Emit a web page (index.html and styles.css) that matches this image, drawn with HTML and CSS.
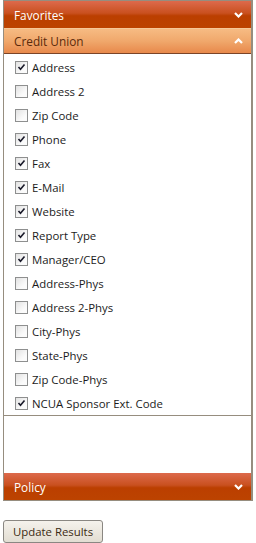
FILE: index.html
```html
<!DOCTYPE html>
<html lang="en">
  <head>
    <meta charset="UTF-8" />
    <meta name="viewport" content="width=device-width, initial-scale=1.0" />
    <title>Filters</title>
    <link rel="stylesheet" href="styles.css">
  </head>
  <body>
    <div class="panel">
      <div class="bar dark">
        <span>Favorites</span>
        <svg class="chev" width="9" height="6" viewBox="0 0 9 6"><path d="M1 1l3.5 3.5L8 1" fill="none" stroke="#fff" stroke-width="2.2"/></svg>
      </div>
      <div class="bar light">
        <span>Credit Union</span>
        <svg class="chev" width="9" height="6" viewBox="0 0 9 6"><path d="M1 5l3.5-3.5L8 5" fill="none" stroke="#fff" stroke-width="2.2"/></svg>
      </div>
      <div class="content">
        <ul class="fields" id="fields"></ul>
      </div>
      <div class="bar dark">
        <span>Policy</span>
        <svg class="chev" width="9" height="6" viewBox="0 0 9 6"><path d="M1 1l3.5 3.5L8 1" fill="none" stroke="#fff" stroke-width="2.2"/></svg>
      </div>
    </div>
    <button class="update">Update Results</button>

    <script>
      // field list
      const fields = [
        ['Address', 1], ['Address 2', 0], ['Zip Code', 0], ['Phone', 1],
        ['Fax', 1], ['E-Mail', 1], ['Website', 1], ['Report Type', 1],
        ['Manager/CEO', 1], ['Address-Phys', 0], ['Address 2-Phys', 0],
        ['City-Phys', 0], ['State-Phys', 0], ['Zip Code-Phys', 0],
        ['NCUA Sponsor Ext. Code', 1]
      ]
      const tick = '<svg width="9" height="8" viewBox="0 0 9 8"><path d="M1.5 4l2 2.3L7.5 1.5" fill="none" stroke="#1a1a2a" stroke-width="1.6"/></svg>'
      document.getElementById('fields').innerHTML = fields
        .map(([name, on]) => `
          <li>
            <span class="box">${on ? tick : ''}</span>
            <span>${name}</span>
          </li>
        `)
        .join('')
    </script>
  </body>
</html>
```

FILE: styles.css
```css
body {
  margin: 0;
  font-family: "Open Sans", "Liberation Sans", sans-serif;
  font-size: 11.4px;
  background: #fff;
}
.panel {
  width: 247px;
  margin-left: 3px;
  border: 1px solid #968d7f;
  border-right-width: 2px;
}
.bar {
  display: flex;
  align-items: center;
  justify-content: space-between;
  height: 26px;
  padding: 0 8px 0 10px;
  font-size: 11.8px;
}
.bar.dark {
  height: 27px;
  color: #fff;
  background: linear-gradient(#dd6a4c 0%, #c9501f 45%, #bb3f00 55%, #bc4300 100%);
}
.bar.light {
  height: 24px;
  color: #5b2a0c;
  border-top: 1px solid #f6c898;
  border-bottom: 1px solid #7b4427;
  background: linear-gradient(#f6bb83 0%, #f0a86c 50%, #e8894b 100%);
}
.content {
  height: 419px;
}
.fields {
  list-style: none;
  margin: 0;
  padding: 1px 0 0;
  border-bottom: 1px solid #968d7f;
}
.fields li {
  display: flex;
  align-items: center;
  gap: 4px;
  height: 24px;
  padding-left: 11px;
  color: #1b1b1b;
}
.box {
  display: flex;
  align-items: center;
  justify-content: center;
  width: 11px;
  height: 11px;
  border: 1px solid #8e8f8f;
  background: linear-gradient(135deg, #e2e2e2, #fbfbfb 70%);
}
.update {
  margin: 19px 0 0 3px;
  width: 100px;
  height: 23px;
  padding: 0;
  font-family: inherit;
  font-size: 11.4px;
  color: #3b2a12;
  border: 1px solid #8a8782;
  border-radius: 3px;
  background: linear-gradient(#f5f2ec, #e2ddd2);
}
```
